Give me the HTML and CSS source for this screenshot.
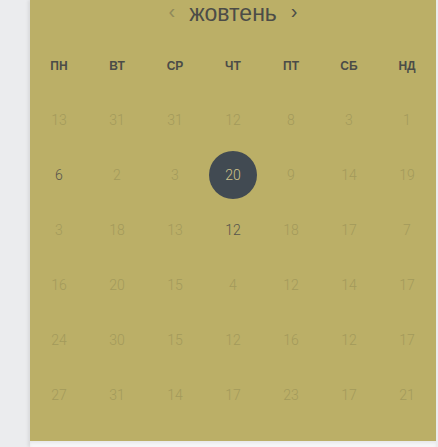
FILE: index.html
```html
<!DOCTYPE html>
<html lang="uk">
<head>
<meta charset="utf-8">
<link rel="stylesheet" href="styles.css">
</head>
<body>
<div class="page">
  <div class="side"></div>
  <div class="main">
    <div class="calendar">
      <div class="head">
        <span class="arrow prev">‹</span>
        <span class="month">жовтень</span>
        <span class="arrow next">›</span>
      </div>
      <div class="weekdays">
        <span>ПН</span><span>ВТ</span><span>СР</span><span>ЧТ</span><span>ПТ</span><span>СБ</span><span>НД</span>
      </div>
      <div class="days">
        <span>13</span><span>31</span><span>31</span><span>12</span><span>8</span><span>3</span><span>1</span>
        <span class="dark">6</span><span>2</span><span>3</span><span><b class="sel">20</b></span><span>9</span><span>14</span><span>19</span>
        <span>3</span><span>18</span><span>13</span><span class="dark">12</span><span>18</span><span>17</span><span>7</span>
        <span>16</span><span>20</span><span>15</span><span>4</span><span>12</span><span>14</span><span>17</span>
        <span>24</span><span>30</span><span>15</span><span>12</span><span>16</span><span>12</span><span>17</span>
        <span>27</span><span>31</span><span>14</span><span>17</span><span>23</span><span>17</span><span>21</span>
      </div>
    </div>
    <div class="footer"></div>
  </div>
</div>
</body>
</html>
```

FILE: styles.css
```css
html, body {
  margin: 0;
  padding: 0;
  background: #ebecee;
  width: 438px;
  height: 447px;
  overflow: hidden;
}
.page {
  display: flex;
  height: 447px;
}
.side {
  width: 30px;
  flex: none;
  background: #ebecee;
}
.main {
  width: 406px;
  flex: none;
  display: flex;
  flex-direction: column;
  box-shadow: -2px 0 3px rgba(0,0,0,0.08);
}
.calendar {
  background: #bbaf67;
  height: 441px;
  box-sizing: border-box;
  font-family: "Liberation Sans", Arial, sans-serif;
}
.head {
  height: 26px;
  display: flex;
  align-items: center;
  justify-content: center;
  gap: 14px;
}
.month {
  font-size: 23px;
  color: #4c4c47;
  line-height: 26px;
}
.arrow {
  font-size: 20px;
  line-height: 20px;
  margin-top: -4px;
}
.prev { color: #8f895a; }
.next { color: #4c4c47; }
.weekdays {
  margin-top: 25px;
  height: 30px;
  display: grid;
  grid-template-columns: repeat(7, 58px);
  align-items: center;
  justify-items: center;
  font-weight: bold;
  font-size: 12px;
  color: #4b4c48;
}
.days {
  margin-top: 11px;
  display: grid;
  grid-template-columns: repeat(7, 58px);
  grid-auto-rows: 55px;
  align-items: center;
  justify-items: center;
  font-family: Roboto, "Liberation Sans", sans-serif;
  font-weight: 300;
  font-size: 14px;
  color: #a39a5b;
}
.days span {
  display: flex;
  align-items: center;
  justify-content: center;
}
.days .dark { color: #55544c; }
.sel {
  width: 48px;
  height: 48px;
  border-radius: 50%;
  background: #414a52;
  color: #cfc48c;
  font-weight: 300;
  display: flex;
  align-items: center;
  justify-content: center;
}
.footer {
  flex: 1;
  background: #f6f6f7;
  box-shadow: inset 0 2px 3px rgba(0,0,0,0.06);
}
```
